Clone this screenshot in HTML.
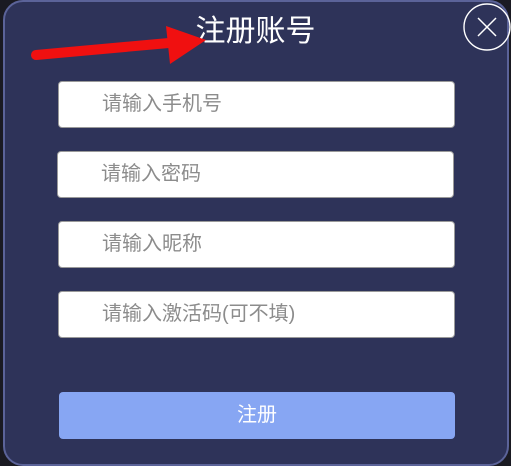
<!DOCTYPE html>
<html><head><meta charset="utf-8"><style>
html,body{margin:0;padding:0;width:511px;height:466px;overflow:hidden;background:#1a1a22;}
body{position:relative;font-family:"Liberation Sans","Noto Sans CJK SC",sans-serif;}
.panel{position:absolute;left:3px;top:0;width:502px;height:462px;background:#2e3359;border:2px solid #5b6399;border-radius:20px;}
.title{position:absolute;left:0;width:511px;top:12px;text-align:center;color:#fff;font-size:30px;line-height:40px;}
.inp{position:absolute;left:58px;width:397px;height:47px;background:#fff;border:1px solid #9a9a9a;border-radius:4px;box-sizing:border-box;color:#8c8c8c;font-size:20px;line-height:45px;padding-left:43px;}
.btn{position:absolute;left:59px;top:392px;width:396px;height:47px;background:#87a6f3;border-radius:4px;color:#fff;font-size:20px;text-align:center;line-height:47px;}
</style></head><body>
<div class="panel"></div>
<div class="title">注册账号</div>
<svg style="position:absolute;left:0;top:0" width="511" height="80">
<line x1="36" y1="55" x2="180" y2="42" stroke="#f01010" stroke-width="10" stroke-linecap="round"/>
<polygon points="166,26 206,40 170,64" fill="#f01010"/>
<circle cx="487" cy="27" r="23" fill="none" stroke="#fff" stroke-width="1.4"/>
<line x1="478" y1="18" x2="496" y2="36" stroke="#fff" stroke-width="1.5"/>
<line x1="496" y1="18" x2="478" y2="36" stroke="#fff" stroke-width="1.5"/>
</svg>
<div class="inp" style="top:81px">请输入手机号</div>
<div class="inp" style="top:151px;left:57px">请输入密码</div>
<div class="inp" style="top:221px">请输入昵称</div>
<div class="inp" style="top:291px">请输入激活码(可不填)</div>
<div class="btn">注册</div>
</body></html>
